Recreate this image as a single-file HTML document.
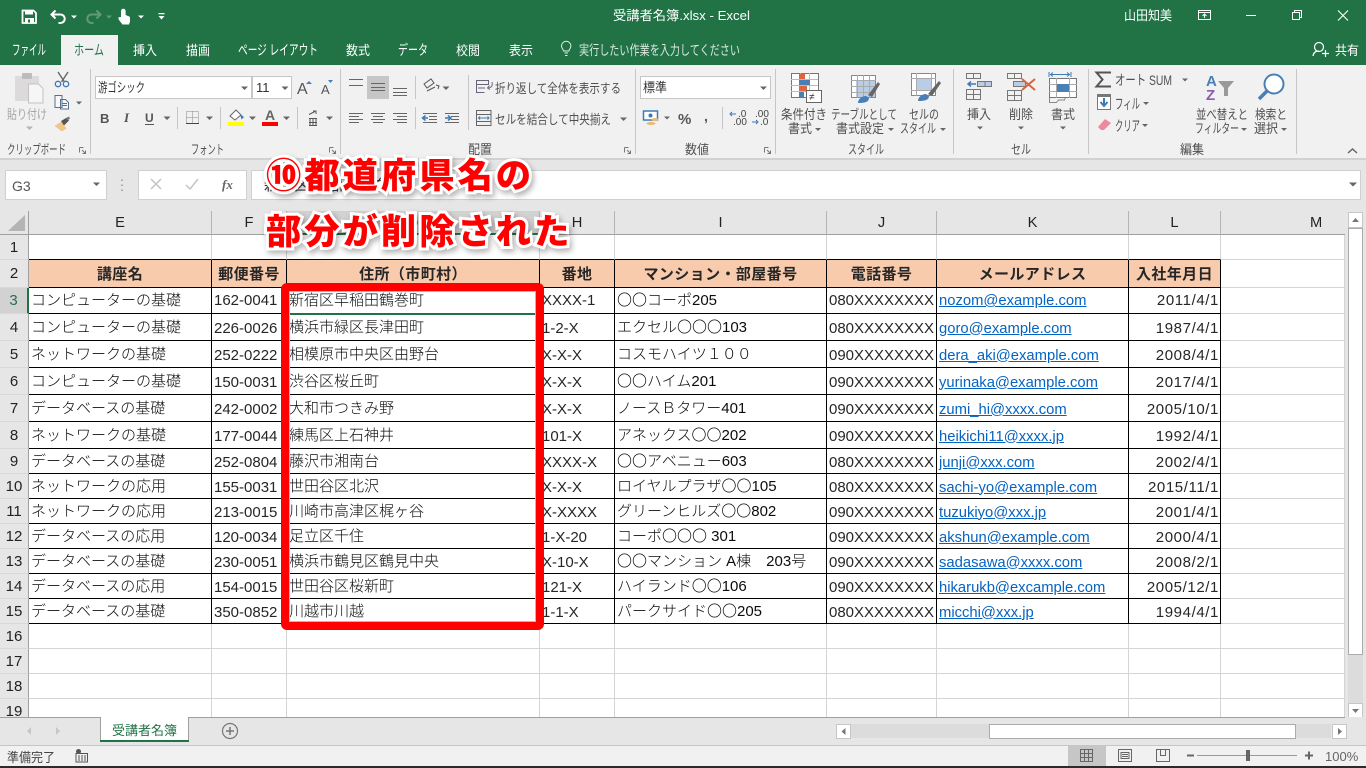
<!DOCTYPE html>
<html lang="ja"><head><meta charset="utf-8"><title>受講者名簿.xlsx - Excel</title>
<style>
html,body{margin:0;padding:0;width:1366px;height:768px;overflow:hidden;background:#e6e6e6}
body{position:relative;font-family:"Liberation Sans","Noto Sans CJK JP",sans-serif}
svg.chrome{position:absolute;left:0;top:0;font-family:"Liberation Sans","Noto Sans CJK JP",sans-serif}
svg.chrome text{font-size:13px;fill:#505050}
svg.chrome .w{fill:#fff}
svg.chrome .a{fill:#666}
#gridwrap{position:absolute;left:0;top:211px;width:1345px;height:506px;overflow:hidden}
table{border-collapse:separate;border-spacing:0;table-layout:fixed;width:1345px;font-size:15px;color:#262626}
td,th{padding:0 2px;box-sizing:border-box;white-space:nowrap;overflow:hidden;font-weight:400;border-right:1px solid #d4d4d4;border-bottom:1px solid #d4d4d4;background:#fff;text-align:left}
tr.ch th{background:#e6e6e6;text-align:center;border-right:1px solid #b4b4b4;border-bottom:1px solid #9f9f9f;color:#222;font-size:14.67px;padding:0}
tr.ch th.sel{background:#d2d2d2;color:#217346;border-bottom:2px solid #217346}
th.r{background:#e6e6e6;text-align:center;padding:0;border-right:1px solid #9f9f9f;border-bottom:1px solid #d8d8d8;color:#222}
th.r.sel{background:#d2d2d2;color:#217346;border-right:2px solid #217346}
tr:nth-child(n+5) td{padding-top:2px}
tr:nth-child(n+5) td.ja{padding-top:0}
td.ja{font-weight:300;padding-bottom:2px;color:#0c0c0c}
tr.h td{background:#f8cbad;font-weight:700;text-align:center;border-right:1px solid #000;border-bottom:3px double #000;letter-spacing:.4px}
tr.d td{border-right:1px solid #000;border-bottom:1px solid #000}
tr.d td.m,tr.h td.m,tr.e td.m{border-right:1px solid #d4d4d4;border-bottom:1px solid #d4d4d4;background:#fff;padding:0}
td.n{text-align:right;letter-spacing:.6px;padding-right:1px}
td a{color:#0563c1;text-decoration:underline;font-size:14.8px}
tr.top td{border-bottom:1px solid #000}
tr.top td.m{border-bottom:1px solid #d4d4d4}
tr.top td.f{border-right:1px solid #d4d4d4}
#sel{position:absolute;left:287px;top:313px;width:252px;height:2px;background:#217346}
#redbox{position:absolute;left:281px;top:283px;width:263px;height:347px;box-sizing:border-box;border:8px solid #f00;border-radius:6px;box-shadow:inset 0 0 0 1px #f8a0a0}
.note{position:absolute;left:266px;font-weight:900;font-size:35.3px;line-height:40px;color:#f00;white-space:nowrap;letter-spacing:3px;-webkit-text-stroke:6px #fff;paint-order:stroke fill;filter:drop-shadow(2px 3px 3px rgba(0,0,0,.3));font-family:"Noto Sans CJK JP",sans-serif}
</style></head><body>

<svg class="chrome" width="1366" height="768" viewBox="0 0 1366 768">
<!-- title bar -->
<rect width="1366" height="65" fill="#217346"/>
<rect x="0" y="65" width="1366" height="93" fill="#f1f1f1"/>
<rect x="0" y="158" width="1366" height="2" fill="#d2d2d2"/>
<rect x="0" y="160" width="1366" height="51" fill="#e6e6e6"/>
<rect x="61" y="35" width="57" height="31" fill="#f1f1f1"/>
<!-- QAT -->
<path d="M22.5 10.5h11l2.5 2.500v10h-13.500z" fill="none" stroke="#fff" stroke-width="1.800"/>
<rect x="25" y="10" width="8" height="4.500" fill="#fff"/><rect x="25" y="18" width="9" height="5" fill="#fff"/><rect x="28" y="19.500" width="2" height="3" fill="#217346"/>
<path d="M52 14.500h8.500a4.200 4.200 0 0 1 0 8.500h-2M55.500 10.500l-4 4 4 4" fill="none" stroke="#fff" stroke-width="2"/>
<path d="M71 15.500h6l-3 3z" fill="#fff"/>
<path d="M100 14.500h-8.500a4.200 4.200 0 0 0 0 8.500h2M96.500 10.500l4 4-4 4" fill="none" stroke="#5f9a7a" stroke-width="2"/>
<path d="M106 15.500h6l-3 3z" fill="#5f9a7a"/>
<path d="M121 17v-6a2.300 2.300 0 0 1 4.600 0v4l3.400 1.400a1.500 1.500 0 0 1 1 1.600v3.500l-1 3h-6.500l-3.500-4.500-.8-2.500 2.300-.5z" fill="#fff"/>
<path d="M138 15.500h6l-3 3z" fill="#fff"/>
<path d="M158.500 13h6v1.200h-6zM158.500 16h6l-3 3.500z" fill="#fff"/>
<text class="w" x="613" y="20" textLength="137" lengthAdjust="spacingAndGlyphs">受講者名簿.xlsx  -  Excel</text>
<text class="w" x="1124" y="20" textLength="48" lengthAdjust="spacingAndGlyphs">山田知美</text>
<rect x="1198.500" y="10.500" width="12" height="9" fill="none" stroke="#fff"/><path d="M1198 12.500h13M1204.500 18v-4M1202.500 16l2-2 2 2" fill="none" stroke="#fff"/>
<path d="M1246 15.500h10" stroke="#fff"/>
<path d="M1292.500 12.500h7v7h-7zM1294.500 12.500v-2h7v7h-2" fill="none" stroke="#fff"/>
<path d="M1338 10.500l10 10M1348 10.500l-10 10" stroke="#fff" stroke-width="1.100"/>
<!-- tabs -->
<text class="w" x="12" y="55" textLength="34" lengthAdjust="spacingAndGlyphs" style="font-size:14px">ファイル</text>
<text x="74" y="55" textLength="30" lengthAdjust="spacingAndGlyphs" style="fill:#217346;font-size:14px">ホーム</text>
<text class="w" x="133" y="55" textLength="24" lengthAdjust="spacingAndGlyphs">挿入</text>
<text class="w" x="186" y="55" textLength="24" lengthAdjust="spacingAndGlyphs">描画</text>
<text class="w" x="238" y="55" textLength="80" lengthAdjust="spacingAndGlyphs" style="font-size:14px">ページ レイアウト</text>
<text class="w" x="346" y="55" textLength="24" lengthAdjust="spacingAndGlyphs">数式</text>
<text class="w" x="398" y="55" textLength="30" lengthAdjust="spacingAndGlyphs" style="font-size:14px">データ</text>
<text class="w" x="456" y="55" textLength="24" lengthAdjust="spacingAndGlyphs">校閲</text>
<text class="w" x="509" y="55" textLength="24" lengthAdjust="spacingAndGlyphs">表示</text>
<path d="M564.500 53h3.500M565 55.500h2.500M563.500 51c0-1.500-2-2.500-2-5a4.700 4.700 0 0 1 9.400 0c0 2.500-2 3.500-2 5z" fill="none" stroke="#e6efe9" stroke-width="1"/>
<text x="579" y="55" textLength="161" lengthAdjust="spacingAndGlyphs" style="fill:#dbe8e0;font-size:13.5px">実行したい作業を入力してください</text>
<circle cx="1319" cy="47" r="4.500" fill="none" stroke="#fff" stroke-width="1.200"/><path d="M1313 56c.5-3.500 3-5 6-5M1322 53.500h7M1325.500 50v7" fill="none" stroke="#fff" stroke-width="1.200"/>
<text class="w" x="1335" y="55" textLength="24" lengthAdjust="spacingAndGlyphs">共有</text>

<!-- separators -->
<path d="M90.500 69v85M340.500 69v85M635.500 69v85M775.500 69v85M953.500 69v85M1088.500 69v85M1296.500 69v85M468.500 75v55M415.500 76v23M415.500 107v22M177.500 107v22M220.500 107v22M297.500 107v22M722.500 107v22" stroke="#c6c6c6" fill="none"/>

<!-- clipboard -->
<rect x="15" y="76" width="24" height="25" rx="1" fill="#dcdadb"/><rect x="22" y="73" width="10" height="6" rx="1" fill="#bdbbbc"/>
<path d="M28.500 84h10l4.500 4.500v14.500h-14.500z" fill="#f6f6f6" stroke="#c2c2c2"/>
<text x="7" y="119" textLength="40" lengthAdjust="spacingAndGlyphs" style="fill:#a6a6a6">貼り付け</text>
<path d="M26 126.500h7l-3.500 3.500z" fill="#b4b4b4"/>
<path d="M58 72l6.500 10M68 72l-6.500 10" stroke="#666" stroke-width="1.400"/><circle cx="58" cy="84" r="2.700" fill="none" stroke="#3f7ab5" stroke-width="1.300"/><circle cx="66" cy="84" r="2.700" fill="none" stroke="#3f7ab5" stroke-width="1.300"/>
<path d="M55 95.500h7v12h-7zM60.500 99.500h5l3 3v6.500h-8z" fill="#f8f8f8" stroke="#55718f"/><path d="M62 103.500h5M62 105.500h5" stroke="#55718f"/>
<path d="M76 101.500h6l-3 3z" class="a"/>
<path d="M54.500 126l7-4.500 5 7-4.500 3z" fill="#f0c58a"/><path d="M61 121l6-3.500 2 3-5 5z" fill="#555"/><path d="M66 118l3-1.500 1 2-2.500 2z" fill="#777"/>
<text x="7" y="154" textLength="59" lengthAdjust="spacingAndGlyphs">クリップボード</text>
<path d="M79.500 147.500h4M79.500 147.500v5M85.500 153.500l-3.500-3.500M85.500 150.500v3h-3" fill="none" stroke="#777"/>

<!-- font -->
<rect x="95.500" y="76.500" width="156" height="22" fill="#fff" stroke="#c6c6c6"/>
<rect x="252.500" y="76.500" width="39" height="22" fill="#fff" stroke="#c6c6c6"/>
<text x="98" y="92" textLength="47" lengthAdjust="spacingAndGlyphs" style="fill:#333">游ゴシック</text>
<text x="256" y="92" style="font-size:13px;fill:#333">11</text>
<path d="M241 86.500h7l-3.500 3.500zM281.500 86.500h7l-3.500 3.500z" class="a"/>
<text x="297" y="94" style="font-size:16px;fill:#555">A</text><path d="M306 84l3-3 3 3z" fill="#4a7fb5"/>
<text x="321" y="94" style="font-size:13px;fill:#555">A</text><path d="M328 80h5l-2.500 3z" fill="#4a7fb5"/>
<text x="100" y="123" style="font-size:13px;font-weight:700;fill:#555">B</text>
<text x="124" y="122" style="font-size:13px;font-style:italic;font-family:'Liberation Serif',serif;font-weight:700;fill:#555">I</text>
<text x="145" y="122" style="font-size:12px;font-weight:700;fill:#555">U</text><path d="M145 124.500h9" stroke="#555"/>
<path d="M163.500 116.500h7l-3.500 3.500zM206 116.500h7l-3.500 3.500zM249 116.500h7l-3.500 3.500zM283 116.500h7l-3.500 3.500zM326 116.500h7l-3.500 3.500z" class="a"/>
<path d="M186.500 111.500h12v12h-12zM192.500 111.500v12M186.500 117.500h12" fill="none" stroke="#888" stroke-dasharray="1 1"/><path d="M186 123.500h13" stroke="#444"/>
<path d="M230 116l6-6 5 5-6 5z" fill="#fff" stroke="#666"/><path d="M240 114l4 3-2.500 2.500z" fill="#3f7ab5"/><rect x="228" y="122" width="16" height="4" fill="#ff0"/>
<text x="265" y="120" style="font-size:14px;font-weight:700;fill:#666">A</text><rect x="262" y="122" width="16" height="4" fill="#f00"/>
<path d="M309 114.500l6-3M313 111h3v3M309 118.500h8M310 118.500v7.500M316 118.500v7.500M313 118.500v7.500M309 122.500h8M309 125.500h8" fill="none" stroke="#555"/>
<text x="191" y="154" textLength="33" lengthAdjust="spacingAndGlyphs">フォント</text>
<path d="M329.500 147.500h4M329.500 147.500v5M335.500 153.500l-3.500-3.500M335.500 150.500v3h-3" fill="none" stroke="#777"/>

<!-- alignment -->
<rect x="367" y="76" width="22" height="23" fill="#c6c6c6"/>
<path d="M349 79.500h14M349 85.500h14M371 83.500h14M371 87.500h14M393 88.500h14M393 92.500h14M393 95.500h14M371 90.500h14" stroke="#666" fill="none"/>
<path d="M424 84l7-5 3 4-7 5zM427 91l8-4M436 85l3 1-1 3" fill="none" stroke="#555"/><path d="M442.500 86.500h7l-3.500 3.500z" class="a"/>
<path d="M349 113.500h14M349 116.500h10M349 119.500h14M349 122.500h10M371 113.500h14M373 116.500h10M371 119.500h14M373 122.500h10M393 113.500h14M397 116.500h10M393 119.500h14M397 122.500h10M423 113.500h14M429 116.500h8M429 119.500h8M423 122.500h14M445 113.500h14M451 116.500h8M451 119.500h8M445 122.500h14" stroke="#666" fill="none"/>
<path d="M428 118h-5M425.500 115.500l-3 2.500 3 2.500" fill="none" stroke="#3f7ab5" stroke-width="1.500"/>
<path d="M445 118h5M448 115.500l3 2.500-3 2.500" fill="none" stroke="#3f7ab5" stroke-width="1.500"/>
<path d="M476.500 80.500h12v4h-12zM476.500 84.500v8h8M478 88h7M492 82c1 4-1 6-4 6M489.500 85.500l-2 2.500 2.500 1.500" fill="none" stroke="#667" />
<text x="495" y="93" textLength="126" lengthAdjust="spacingAndGlyphs">折り返して全体を表示する</text>
<path d="M476.500 110.500h14.500v15h-14.500zM476.500 114.500h14.500M476.500 121.500h14.500" fill="none" stroke="#666"/><path d="M479 118h9.500M480 116.500l-1.500 1.500 1.500 1.500M487.500 116.500l1.500 1.500-1.500 1.500" fill="none" stroke="#3f7ab5"/>
<text x="495" y="124" textLength="116" lengthAdjust="spacingAndGlyphs">セルを結合して中央揃え</text>
<path d="M620 117.500h7l-3.500 3.500z" class="a"/>
<text x="468" y="154" textLength="24" lengthAdjust="spacingAndGlyphs">配置</text>
<path d="M624.500 147.500h4M624.500 147.500v5M630.500 153.500l-3.500-3.500M630.500 150.500v3h-3" fill="none" stroke="#777"/>

<!-- number -->
<rect x="640.500" y="76.500" width="130" height="22" fill="#fff" stroke="#c6c6c6"/>
<text x="643" y="92" textLength="24" lengthAdjust="spacingAndGlyphs" style="fill:#333">標準</text>
<path d="M760 86.500h7l-3.500 3.500z" class="a"/>
<rect x="643.500" y="111" width="14" height="9" fill="#fff" stroke="#3f7ab5" stroke-width="1.500"/><circle cx="650.500" cy="115.500" r="2" fill="#3f7ab5"/>
<ellipse cx="651" cy="123.500" rx="4.500" ry="1.500" fill="#eab971"/><ellipse cx="655" cy="119.500" rx="3.500" ry="1.500" fill="#eab971"/>
<path d="M664 116.500h6l-3 3z" class="a"/>
<text x="678" y="124" style="font-size:15px;font-weight:700;fill:#555">%</text>
<text x="704" y="121" style="font-size:14px;font-weight:700;fill:#555">,</text>
<text x="738" y="117" style="font-size:10px;fill:#444">.0</text><text x="733" y="125" style="font-size:10px;fill:#444">.00</text>
<path d="M736 114h-6M732 112l-2 2 2 2" fill="none" stroke="#3f7ab5"/>
<text x="755" y="117" style="font-size:10px;fill:#444">.00</text><text x="760" y="125" style="font-size:10px;fill:#444">.0</text>
<path d="M752 122h6M756 120l2 2-2 2" fill="none" stroke="#3f7ab5"/>
<text x="685" y="154" textLength="24" lengthAdjust="spacingAndGlyphs">数値</text>
<path d="M764.500 147.500h4M764.500 147.500v5M770.500 153.500l-3.500-3.500M770.500 150.500v3h-3" fill="none" stroke="#777"/>

<!-- styles -->
<rect x="791.500" y="73.500" width="27" height="24" fill="#fff" stroke="#777"/>
<path d="M791 79.500h27M791 85.500h27M791 91.500h27M800.500 73v25M809.500 73v25" stroke="#bbb"/>
<rect x="799" y="74" width="6" height="5" fill="#e0643c"/><rect x="799" y="80" width="11" height="5" fill="#4a7fb5"/><rect x="799" y="86" width="8" height="5" fill="#e0643c"/><rect x="799" y="92" width="5" height="6" fill="#4a7fb5"/>
<rect x="806.500" y="90.500" width="15" height="12" fill="#fff" stroke="#666"/><text x="809" y="100" style="font-size:10px;fill:#333">≠</text>
<text x="781" y="119" textLength="46" lengthAdjust="spacingAndGlyphs">条件付き</text><text x="788" y="133" textLength="24" lengthAdjust="spacingAndGlyphs">書式</text><path d="M815 128h6l-3 3z" class="a"/>
<rect x="851.500" y="75.500" width="24" height="22" fill="#fff" stroke="#888"/><rect x="856" y="80" width="19" height="17" fill="#b9cde5"/><path d="M851 80.500h25M851 86.500h25M851 92.500h25M857.500 75v23M863.500 75v23M869.500 75v23" stroke="#aaa"/>
<path d="M868 95l10-13 2 2-8 13z" fill="#666"/><path d="M858 103c0-4 4-7 8-7l3 2c0 4-4 5-11 5z" fill="#4a7fb5"/>
<text x="831" y="119" textLength="66" lengthAdjust="spacingAndGlyphs">テーブルとして</text><text x="836" y="133" textLength="48" lengthAdjust="spacingAndGlyphs">書式設定</text><path d="M888 128h6l-3 3z" class="a"/>
<rect x="911.500" y="73.500" width="24" height="22" fill="#fff" stroke="#888"/><rect x="916" y="79" width="15" height="11" fill="#b9cde5"/><path d="M911 78.500h25M911 90.500h25M916.500 73v23M931.500 73v23" stroke="#aaa"/>
<path d="M928 94l11-13 2 2-9 13z" fill="#666"/><path d="M918 101c0-4 4-7 8-7l3 2c0 4-4 5-11 5z" fill="#4a7fb5"/>
<text x="909" y="119" textLength="30" lengthAdjust="spacingAndGlyphs">セルの</text><text x="900" y="133" textLength="36" lengthAdjust="spacingAndGlyphs">スタイル</text><path d="M940 128h6l-3 3z" class="a"/>
<text x="848" y="154" textLength="36" lengthAdjust="spacingAndGlyphs">スタイル</text>

<!-- cells -->
<path d="M966.500 73.500h14v5h-14zM973.500 73.500v5M966.500 89.500h14v10h-14zM973.500 89.500v10M966.500 94.500h14" fill="none" stroke="#777"/>
<path d="M977.500 81.500h14v5h-14z" fill="#b9cde5" stroke="#777"/><path d="M985 81.500v5" stroke="#777"/><path d="M976 84h-8M971 81.500l-3 2.500 3 2.500" fill="none" stroke="#3f7ab5" stroke-width="1.500"/>
<text x="967" y="119" textLength="24" lengthAdjust="spacingAndGlyphs">挿入</text><path d="M977 126.500h6l-3 3z" class="a"/>
<path d="M1007.500 73.500h14v5h-14zM1014.500 73.500v5M1007.500 90.500h14v10h-14zM1014.500 90.500v10M1007.500 95.500h14" fill="none" stroke="#777"/>
<rect x="1013.500" y="81.500" width="12" height="5" fill="#b9cde5" stroke="#777"/><path d="M1022 79l13 11M1035 79l-13 11" stroke="#d9633c" stroke-width="2"/>
<text x="1009" y="119" textLength="24" lengthAdjust="spacingAndGlyphs">削除</text><path d="M1018 126.500h6l-3 3z" class="a"/>
<path d="M1049 72v5M1071 72v5M1050 74.500h20M1053 72.500l-2.500 2 2.500 2M1067 72.500l2.500 2-2.500 2" fill="none" stroke="#3f7ab5"/>
<rect x="1049.500" y="78.500" width="27" height="19" fill="#fff" stroke="#777"/><path d="M1049 84.500h28M1049 91.500h28M1056.500 78v20M1069.500 78v20" stroke="#aaa"/><rect x="1057" y="84" width="12" height="8" fill="#4a7fb5"/>
<path d="M1049.500 98v4.500h7l2-2.500h6l1-3" fill="none" stroke="#888"/>
<text x="1051" y="119" textLength="24" lengthAdjust="spacingAndGlyphs">書式</text><path d="M1060 126.500h6l-3 3z" class="a"/>
<text x="1011" y="154" textLength="20" lengthAdjust="spacingAndGlyphs">セル</text>

<!-- editing -->
<path d="M1111 72.500h-14.500l6 7-6 7h14.500" fill="none" stroke="#555" stroke-width="2"/>
<text x="1115" y="85" textLength="57" lengthAdjust="spacingAndGlyphs" style="font-size:14px">オート SUM</text><path d="M1182 78.500h6l-3 3z" class="a"/>
<rect x="1097.500" y="94.500" width="13" height="15" fill="#fff" stroke="#777"/><rect x="1097" y="94" width="14" height="3" fill="#777"/><path d="M1104 98v7M1100.500 102l3.500 4 3.500-4" fill="none" stroke="#3f7ab5" stroke-width="2"/>
<text x="1115" y="109" textLength="25" lengthAdjust="spacingAndGlyphs" style="font-size:14px">フィル</text><path d="M1143 102h6l-3 3z" class="a"/>
<path d="M1098 127l7-8 6 4-7 7h-3z" fill="#ec8a9d"/>
<text x="1115" y="131" textLength="25" lengthAdjust="spacingAndGlyphs" style="font-size:14px">クリア</text><path d="M1142 124h6l-3 3z" class="a"/>
<text x="1206" y="86" style="font-size:15px;font-weight:700;fill:#4a7fb5">A</text>
<text x="1206" y="100" style="font-size:15px;font-weight:700;fill:#8a5cb0">Z</text>
<path d="M1218 81h16l-6 7v8h-4v-8z" fill="#999"/>
<text x="1196" y="119" textLength="52" lengthAdjust="spacingAndGlyphs">並べ替えと</text>
<text x="1195" y="133" textLength="44" lengthAdjust="spacingAndGlyphs">フィルター</text><path d="M1241 128h6l-3 3z" class="a"/>
<circle cx="1274" cy="84" r="9.500" fill="#fff" stroke="#4a7fb5" stroke-width="2"/><path d="M1267 91l-8 8" stroke="#4a7fb5" stroke-width="3.500"/>
<text x="1255" y="119" textLength="32" lengthAdjust="spacingAndGlyphs">検索と</text>
<text x="1254" y="133" textLength="24" lengthAdjust="spacingAndGlyphs">選択</text><path d="M1281 128h6l-3 3z" class="a"/>
<text x="1180" y="154" textLength="24" lengthAdjust="spacingAndGlyphs">編集</text>
<path d="M1348 153l4.500-4 4.500 4" fill="none" stroke="#666" stroke-width="1.500"/>

<!-- formula bar -->
<rect x="5.500" y="170.500" width="101" height="29" fill="#fff" stroke="#d0d0d0"/>
<text x="12" y="191" style="font-size:14px;fill:#555">G3</text>
<path d="M93 182.500h7l-3.500 3.500z" class="a"/>
<path d="M122 179.500v1.500M122 184.500v1.500M122 189.500v1.500" stroke="#999" stroke-width="1.500"/>
<rect x="138.500" y="170.500" width="108" height="29" fill="#fff" stroke="#d0d0d0"/>
<path d="M151 179l10 10M161 179l-10 10" stroke="#c4c4c4" stroke-width="1.500"/>
<path d="M186 185l4 4 8-10" fill="none" stroke="#c4c4c4" stroke-width="1.500"/>
<text x="222" y="189" style="font-size:13px;font-style:italic;font-weight:700;font-family:'Liberation Serif',serif;fill:#666">fx</text>
<rect x="251.500" y="170.500" width="1109" height="29" fill="#fff" stroke="#d0d0d0"/>
<text x="264" y="190" style="font-size:15px;fill:#333">新宿区早稲田鶴巻町</text>
<path d="M1349 182.500h8l-4 4z" class="a"/>

<!-- corner + scrollbar -->
<path d="M25 215v16h-17z" fill="#b4b4b4"/>
<rect x="1345" y="211" width="21" height="506" fill="#e6e6e6"/>
<rect x="1348" y="228" width="15" height="489" fill="#dcdcdc"/>
<rect x="1348.500" y="212.500" width="14" height="15" fill="#fff" stroke="#c6c6c6"/><path d="M1352 222l3.500-4 3.500 4z" fill="#777"/>
<rect x="1348.500" y="228.500" width="14" height="426" fill="#fff" stroke="#ababab"/>
<rect x="1348.500" y="703.500" width="14" height="14" fill="#fff" stroke="#c6c6c6"/><path d="M1352 709h7l-3.500 4z" fill="#777"/>
<path d="M1344.500 211v507" stroke="#9f9f9f"/>

<!-- sheet tabs -->
<rect x="0" y="717" width="1366" height="28" fill="#e6e6e6"/>
<path d="M0 717.500h1345" stroke="#9f9f9f"/>
<path d="M31 727v8l-4-4zM56 727v8l4-4z" fill="#c6c6c6"/>
<path d="M100.500 718v24M188.500 718v24" stroke="#9f9f9f"/><rect x="101" y="717" width="87" height="24" fill="#fff"/>
<rect x="100" y="740" width="89" height="2" fill="#217346"/>
<text x="112" y="735" textLength="65" lengthAdjust="spacingAndGlyphs" style="fill:#217346;font-size:13px">受講者名簿</text>
<circle cx="230" cy="731" r="7.500" fill="none" stroke="#777" stroke-width="1.200"/><path d="M230 727v8M226 731h8" stroke="#777" stroke-width="1.500"/>
<rect x="851" y="724" width="480" height="14" fill="#dcdcdc"/>
<rect x="836.500" y="724.500" width="14" height="14" fill="#fff" stroke="#c6c6c6"/><path d="M845.500 728v7l-4-3.500z" fill="#777"/>
<rect x="989.500" y="724.500" width="306" height="14" fill="#fff" stroke="#ababab"/>
<rect x="1332.500" y="724.500" width="14" height="14" fill="#fff" stroke="#c6c6c6"/><path d="M1338 728v7l4-3.500z" fill="#777"/>

<!-- status bar -->
<rect x="0" y="745" width="1366" height="21" fill="#f1f1f1"/>
<path d="M0 745.500h1366" stroke="#c6c6c6"/>
<rect x="0" y="766" width="1366" height="2" fill="#2b2b2b"/>
<text x="7" y="762" textLength="48" lengthAdjust="spacingAndGlyphs" style="fill:#444">準備完了</text>
<circle cx="78.500" cy="751.500" r="2.500" fill="#555"/><path d="M76 753.500h11.500v8.500h-11.500z" fill="none" stroke="#555"/><path d="M78 756h8M78 758h8M78 760h8" stroke="#555" stroke-dasharray="2 1"/>
<rect x="1068" y="746" width="38" height="20" fill="#c6c6c6"/>
<path d="M1080.500 749.500h12v12h-12zM1084.500 749.500v12M1088.500 749.500v12M1080.500 753.500h12M1080.500 757.500h12" fill="none" stroke="#666"/>
<path d="M1118.500 749.500h13v12h-13zM1121 752.500h8v6h-8zM1122 754.500h6M1122 756.500h6" fill="none" stroke="#666"/>
<path d="M1156.500 749.500h13v12h-13zM1160.500 749.500v6h5v-6" fill="none" stroke="#666"/>
<path d="M1187 755.500h7" stroke="#666" stroke-width="2"/>
<path d="M1197 755.500h100" stroke="#999"/><rect x="1246" y="750" width="4" height="11" fill="#666"/>
<path d="M1305 755.500h8M1309 751.500v8" stroke="#666" stroke-width="2"/>
<text x="1325" y="761" style="font-size:13px;fill:#666">100%</text>
</svg>

<div id="gridwrap">
<table>
<colgroup><col style="width:29px"><col style="width:183px"><col style="width:75px"><col style="width:253px"><col style="width:75px"><col style="width:212px"><col style="width:110px"><col style="width:192px"><col style="width:92px"><col style="width:124px"></colgroup>
<tr class="ch" style="height:24px"><th style="background:transparent;border:0;border-right:1px solid #9f9f9f;border-bottom:1px solid #9f9f9f"></th><th>E</th><th>F</th><th class="sel">G</th><th>H</th><th>I</th><th>J</th><th>K</th><th>L</th><th style="text-align:left;padding-left:89px;border-right:0">M</th></tr>
<tr class="top" style="height:25px"><th class="r">1</th><td class="f"></td><td class="f"></td><td class="f"></td><td class="f"></td><td class="f"></td><td class="f"></td><td class="f"></td><td class="f"></td><td class="m"></td></tr>
<tr class="h d" style="height:28px"><th class="r">2</th><td>講座名</td><td>郵便番号</td><td>住所（市町村）</td><td>番地</td><td>マンション・部屋番号</td><td>電話番号</td><td>メールアドレス</td><td>入社年月日</td><td class="m"></td></tr>
<tr class="d" style="height:26px"><th class="r sel">3</th><td class="ja">コンピューターの基礎</td><td>162-0041</td><td class="ja">新宿区早稲田鶴巻町</td><td>XXXX-1</td><td class="ja">〇〇コーポ205</td><td>080XXXXXXXX</td><td><a>nozom@example.com</a></td><td class="n">2011/4/1</td><td class="m"></td></tr>
<tr class="d" style="height:27px"><th class="r">4</th><td class="ja">コンピューターの基礎</td><td>226-0026</td><td class="ja">横浜市緑区長津田町</td><td>1-2-X</td><td class="ja">エクセル〇〇〇103</td><td>080XXXXXXXX</td><td><a>goro@example.com</a></td><td class="n">1987/4/1</td><td class="m"></td></tr>
<tr class="d" style="height:27px"><th class="r">5</th><td class="ja">ネットワークの基礎</td><td>252-0222</td><td class="ja">相模原市中央区由野台</td><td>X-X-X</td><td class="ja">コスモハイツ１００</td><td>090XXXXXXXX</td><td><a>dera_aki@example.com</a></td><td class="n">2008/4/1</td><td class="m"></td></tr>
<tr class="d" style="height:27px"><th class="r">6</th><td class="ja">コンピューターの基礎</td><td>150-0031</td><td class="ja">渋谷区桜丘町</td><td>X-X-X</td><td class="ja">〇〇ハイム201</td><td>090XXXXXXXX</td><td><a>yurinaka@example.com</a></td><td class="n">2017/4/1</td><td class="m"></td></tr>
<tr class="d" style="height:27px"><th class="r">7</th><td class="ja">データベースの基礎</td><td>242-0002</td><td class="ja">大和市つきみ野</td><td>X-X-X</td><td class="ja">ノースＢタワー401</td><td>090XXXXXXXX</td><td><a>zumi_hi@xxxx.com</a></td><td class="n">2005/10/1</td><td class="m"></td></tr>
<tr class="d" style="height:27px"><th class="r">8</th><td class="ja">ネットワークの基礎</td><td>177-0044</td><td class="ja">練馬区上石神井</td><td>101-X</td><td class="ja">アネックス〇〇202</td><td>090XXXXXXXX</td><td><a>heikichi11@xxxx.jp</a></td><td class="n">1992/4/1</td><td class="m"></td></tr>
<tr class="d" style="height:25px"><th class="r">9</th><td class="ja">データベースの基礎</td><td>252-0804</td><td class="ja">藤沢市湘南台</td><td>XXXX-X</td><td class="ja">〇〇アベニュー603</td><td>080XXXXXXXX</td><td><a>junji@xxx.com</a></td><td class="n">2002/4/1</td><td class="m"></td></tr>
<tr class="d" style="height:25px"><th class="r">10</th><td class="ja">ネットワークの応用</td><td>155-0031</td><td class="ja">世田谷区北沢</td><td>X-X-X</td><td class="ja">ロイヤルプラザ〇〇105</td><td>080XXXXXXXX</td><td><a>sachi-yo@example.com</a></td><td class="n">2015/11/1</td><td class="m"></td></tr>
<tr class="d" style="height:25px"><th class="r">11</th><td class="ja">ネットワークの応用</td><td>213-0015</td><td class="ja">川崎市高津区梶ヶ谷</td><td>X-XXXX</td><td class="ja">グリーンヒルズ〇〇802</td><td>090XXXXXXXX</td><td><a>tuzukiyo@xxx.jp</a></td><td class="n">2001/4/1</td><td class="m"></td></tr>
<tr class="d" style="height:25px"><th class="r">12</th><td class="ja">データベースの応用</td><td>120-0034</td><td class="ja">足立区千住</td><td>1-X-20</td><td class="ja">コーポ〇〇〇 301</td><td>090XXXXXXXX</td><td><a>akshun@example.com</a></td><td class="n">2000/4/1</td><td class="m"></td></tr>
<tr class="d" style="height:25px"><th class="r">13</th><td class="ja">データベースの基礎</td><td>230-0051</td><td class="ja">横浜市鶴見区鶴見中央</td><td>X-10-X</td><td class="ja">〇〇マンション A棟　203号</td><td>090XXXXXXXX</td><td><a>sadasawa@xxxx.com</a></td><td class="n">2008/2/1</td><td class="m"></td></tr>
<tr class="d" style="height:25px"><th class="r">14</th><td class="ja">データベースの応用</td><td>154-0015</td><td class="ja">世田谷区桜新町</td><td>121-X</td><td class="ja">ハイランド〇〇106</td><td>090XXXXXXXX</td><td><a>hikarukb@excample.com</a></td><td class="n">2005/12/1</td><td class="m"></td></tr>
<tr class="d" style="height:25px"><th class="r">15</th><td class="ja">データベースの基礎</td><td>350-0852</td><td class="ja">川越市川越</td><td>1-1-X</td><td class="ja">パークサイド〇〇205</td><td>080XXXXXXXX</td><td><a>micchi@xxx.jp</a></td><td class="n">1994/4/1</td><td class="m"></td></tr>
<tr class="e" style="height:25px"><th class="r">16</th><td></td><td></td><td></td><td></td><td></td><td></td><td></td><td></td><td></td></tr>
<tr class="e" style="height:25px"><th class="r">17</th><td></td><td></td><td></td><td></td><td></td><td></td><td></td><td></td><td></td></tr>
<tr class="e" style="height:25px"><th class="r">18</th><td></td><td></td><td></td><td></td><td></td><td></td><td></td><td></td><td></td></tr>
<tr class="e" style="height:25px"><th class="r">19</th><td></td><td></td><td></td><td></td><td></td><td></td><td></td><td></td><td></td></tr>
</table>
</div>

<div id="sel"></div>
<div id="redbox"></div>
<div class="note" style="top:154px">⑩都道府県名の</div>
<div class="note" style="top:210px">部分が削除された</div>
</body></html>
